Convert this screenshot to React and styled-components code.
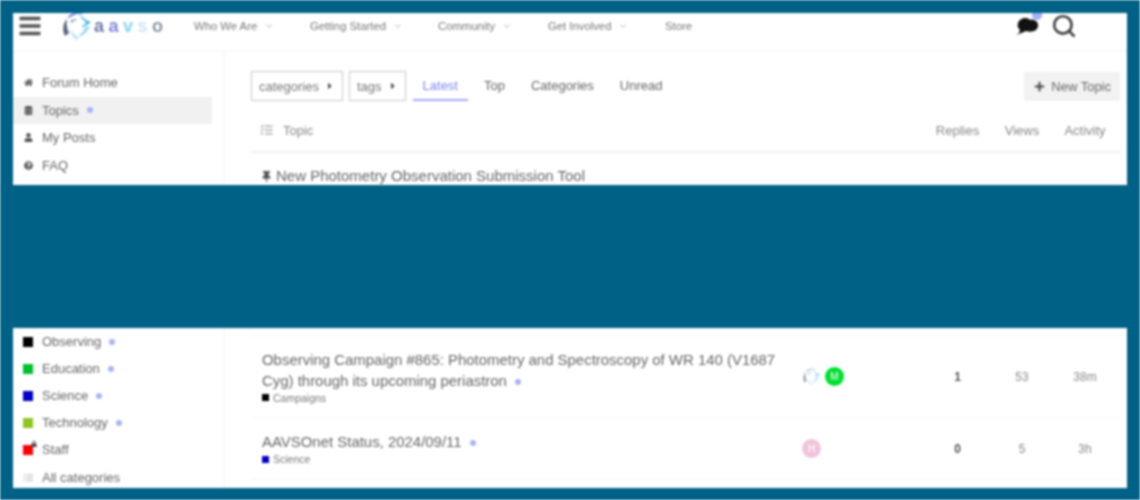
import React from "react";
import styled, { createGlobalStyle } from "styled-components";
import {
  FaBars,
  FaCaretRight,
  FaDatabase,
  FaHome,
  FaListUl,
  FaLock,
  FaPlus,
  FaQuestionCircle,
  FaTasks,
  FaThumbtack,
  FaUser,
} from "react-icons/fa";
import { FiChevronDown, FiSearch } from "react-icons/fi";

const GlobalStyle = createGlobalStyle`
  html, body {
    margin: 0;
    padding: 0;
    background: #fff;
  }
  body {
    font-family: "Liberation Sans", Arial, sans-serif;
    color: #555;
  }
`;

const Frame = styled.div`
  width: 1140px;
  height: 500px;
  box-sizing: border-box;
  padding: 13px 13px 0;
  display: flex;
  flex-direction: column;
  overflow: hidden;
  background: #006186;
  filter: blur(0.8px);
`;

const Panel = styled.section`
  height: ${(p) => p.$height}px;
  margin-bottom: ${(p) => p.$gap || 0}px;
  flex: none;
  background: #fff;
  overflow: hidden;
`;

const Header = styled.header`
  height: 26px;
  padding-bottom: 12px;
  display: flex;
  align-items: center;
  border-bottom: 1px solid #f3f3f3;
  color: #555;
`;

const Burger = styled(FaBars)`
  width: 24px;
  height: 24px;
  margin-left: 5px;
  color: #555;
`;

const LogoBox = styled.div`
  display: flex;
  align-items: center;
  margin-left: 19px;
  width: 133px;
`;

const LogoText = styled.div`
  display: flex;
  gap: 4.5px;
  margin-left: 1px;
  font-size: 18px;
  font-weight: 700;
  line-height: 20px;
`;

const LogoLetter = styled.span`
  color: ${(p) => p.$color};
`;

const NavItem = styled.div`
  display: flex;
  align-items: center;
  gap: 7px;
  width: ${(p) => p.$width}px;
  font-size: 11.3px;
  color: #777;
  svg {
    width: 10px;
    height: 10px;
    color: #aab;
  }
`;

const HeaderIcons = styled.div`
  margin-left: auto;
  margin-right: 50px;
  display: flex;
  align-items: center;
  gap: 12px;
`;

const ChatWrap = styled.div`
  position: relative;
  display: flex;
  color: #111;
`;

const ChatDot = styled.span`
  position: absolute;
  top: -6px;
  right: -3px;
  width: 10px;
  height: 10px;
  border-radius: 50%;
  background: #9fb0f5;
`;

const SearchIcon = styled(FiSearch)`
  width: 26px;
  height: 26px;
  color: #444;
  stroke-width: 2.5;
`;

const Columns = styled.div`
  display: grid;
  grid-template-columns: 211px 1fr;
`;

const Sidebar = styled.nav`
  border-right: 1px solid #f5f5f5;
  min-height: 440px;
  padding-top: ${(p) => p.$top}px;
`;

const SideRow = styled.div`
  height: ${(p) => p.$rowHeight || 27.5}px;
  width: 199px;
  display: flex;
  align-items: center;
  font-size: 13px;
  color: #666;
  background: ${(p) => (p.$active ? "#f1f1f1" : "transparent")};
`;

const SideIcon = styled.span`
  width: 29px;
  padding-left: 11px;
  box-sizing: border-box;
  display: flex;
  align-items: center;
  color: ${(p) => p.$color || "#555"};
  svg {
    width: 9px;
    height: 9px;
  }
`;

const CatSquare = styled.span`
  position: relative;
  display: block;
  width: 10px;
  height: 10px;
  margin-left: -1px;
  background: ${(p) => p.$color};
`;

const StaffLock = styled(FaLock)`
  position: absolute;
  top: -4px;
  right: -4px;
  color: #444;
  && {
    width: 6px;
    height: 6px;
  }
`;

const Dot = styled.span`
  display: inline-block;
  width: 6px;
  height: 6px;
  margin-left: ${(p) => p.$gap || 8}px;
  border-radius: 50%;
  background: #a5b4f5;
  vertical-align: middle;
`;

const Main = styled.main`
  padding: ${(p) => p.$top}px 7px 0 27px;
`;

const Controls = styled.div`
  display: flex;
  align-items: center;
  height: 30px;
`;

const DropBox = styled.div`
  height: 30px;
  box-sizing: border-box;
  padding: 0 7px;
  margin-right: 6px;
  display: flex;
  align-items: center;
  gap: 6px;
  border: 1px solid #c9c9c9;
  font-size: 13px;
  color: #777;
  svg {
    width: 10px;
    height: 10px;
    color: #444;
  }
`;

const Tab = styled.div`
  height: 30px;
  margin-left: ${(p) => p.$gap}px;
  padding: 0 10px;
  display: flex;
  align-items: center;
  box-sizing: border-box;
  font-size: 13px;
  color: ${(p) => (p.$active ? "#7f86f0" : "#666")};
  border-bottom: 2px solid ${(p) => (p.$active ? "#a5a9f5" : "transparent")};
`;

const NewTopic = styled.div`
  margin-left: auto;
  height: 29px;
  padding: 0 9px 0 10px;
  display: flex;
  align-items: center;
  gap: 6px;
  background: #f2f2f2;
  font-size: 13px;
  color: #666;
  svg {
    width: 11px;
    height: 11px;
    color: #444;
  }
`;

const TableHead = styled.div`
  display: grid;
  grid-template-columns: 1fr 73px 56px 70px;
  align-items: center;
  height: 42px;
  padding: 8px 0 0 9px;
  border-bottom: 2px solid #f1f1f1;
  font-size: 13px;
  color: #888;
`;

const TopicHead = styled.div`
  display: flex;
  align-items: center;
  gap: 10px;
  svg {
    width: 13px;
    height: 12px;
    color: #aaa;
  }
`;

const HeadCell = styled.div`
  text-align: center;
`;

const PinnedTitle = styled.div`
  display: flex;
  align-items: center;
  gap: 5px;
  padding: 13px 0 0 11px;
  font-size: 15px;
  line-height: 20px;
  color: #666;
  svg {
    width: 9px;
    height: 11px;
    color: #555;
  }
`;

const TopicRow = styled.div`
  display: grid;
  grid-template-columns: 540px 1fr 73px 56px 70px;
  align-items: center;
  height: ${(p) => p.$height}px;
  padding-left: 11px;
  box-sizing: border-box;
  border-top: 1px solid #f7f7f7;
`;

const TopicText = styled.div`
  width: 520px;
`;

const TopicTitle = styled.div`
  font-size: 14.95px;
  line-height: 21px;
  color: #666;
`;

const TopicCat = styled.div`
  display: flex;
  align-items: center;
  gap: 4px;
  font-size: 10.5px;
  line-height: 14px;
  color: #777;
`;

const TinySquare = styled.span`
  width: 7px;
  height: 7px;
  background: ${(p) => p.$color};
`;

const Posters = styled.div`
  display: flex;
  align-items: center;
  gap: 4px;
`;

const Avatar = styled.span`
  width: 19px;
  height: 19px;
  border-radius: 50%;
  display: flex;
  align-items: center;
  justify-content: center;
  background: ${(p) => p.$color};
  color: #fff;
  font-size: 10px;
`;

const FadedMark = styled.span`
  display: flex;
  opacity: 0.6;
`;

const Stat = styled.div`
  text-align: center;
  font-size: 12px;
  color: ${(p) => (p.$bold ? "#555" : "#888")};
  font-weight: ${(p) => (p.$bold ? 700 : 400)};
`;

// swirl mark used for the logo and the first poster avatar
const Swirl = ({ size }) => (
  <svg width={size} height={size} viewBox="0 0 32 32" fill="none">
    <path d="M6 8c4-6 12-7 17-4-5-1-10 0-13 3z" fill="#7d8fd8" />
    <path d="M18 2c2 5 6 8 12 10-4 3-7 5-10 5 3-2 5-4 5-5-3-2-6-5-7-10z" fill="#46b9e6" />
    <path d="M29 16c-2 6-7 10-13 11 3-2 7-6 8-10z" fill="#9fdcf2" />
    <path d="M16 30c-4-2-7-6-7-11 2 3 4 6 9 8z" fill="#bfe6f4" />
    <path d="M4 26C1 20 2 13 6 9c-1 5 0 10 2 14z" fill="#59677f" />
    <path d="M9 11c3-2 6-2 8-1-3 0-5 1-6 3z" fill="#8da0c8" />
  </svg>
);

const ChatBlob = () => (
  <svg width="24" height="20" viewBox="0 0 24 20" fill="currentColor">
    <path d="M3 19l2-5C3 12 2 10 3 7c1-3 4-5 8-5 2 0 3 1 4 2 2-1 5 0 7 2 2 3 1 6-1 8-3 2-7 2-10 1-3 1-6 3-10 4z" />
  </svg>
);

const navItems = [
  { label: "Who We Are", width: 116, chevron: true },
  { label: "Getting Started", width: 128, chevron: true },
  { label: "Community", width: 110, chevron: true },
  { label: "Get Involved", width: 117, chevron: true },
  { label: "Store", width: 60 },
];

const logoLetters = [
  ["a", "#6f78a8"],
  ["a", "#7d88e0"],
  ["v", "#8ad4f4"],
  ["s", "#cfe6f2"],
  ["o", "#8c97a5"],
];

const categories = [
  { label: "Observing", color: "#000", dot: true },
  { label: "Education", color: "#00c030", dot: true },
  { label: "Science", color: "#0000c8", dot: true },
  { label: "Technology", color: "#8cc620", dot: true },
  { label: "Staff", color: "#f00", lock: true },
];

export default function App() {
  return (
    <>
      <GlobalStyle />
      <Frame>
        <Panel $height={172} $gap={143}>
          <Header>
            <Burger />
            <LogoBox>
              <Swirl size={32} />
              <LogoText>
                {logoLetters.map(([letter, color], i) => (
                  <LogoLetter key={i} $color={color}>{letter}</LogoLetter>
                ))}
              </LogoText>
            </LogoBox>
            {navItems.map((item) => (
              <NavItem key={item.label} $width={item.width}>
                {item.label}
                {item.chevron && <FiChevronDown />}
              </NavItem>
            ))}
            <HeaderIcons>
              <ChatWrap>
                <ChatBlob />
                <ChatDot />
              </ChatWrap>
              <SearchIcon />
            </HeaderIcons>
          </Header>
          <Columns>
            <Sidebar $top={17}>
              <SideRow><SideIcon><FaHome /></SideIcon>Forum Home</SideRow>
              <SideRow $active><SideIcon><FaDatabase /></SideIcon>Topics<Dot /></SideRow>
              <SideRow><SideIcon><FaUser /></SideIcon>My Posts</SideRow>
              <SideRow><SideIcon><FaQuestionCircle /></SideIcon>FAQ</SideRow>
            </Sidebar>
            <Main $top={19}>
              <Controls>
                <DropBox>categories<FaCaretRight /></DropBox>
                <DropBox>tags<FaCaretRight /></DropBox>
                <Tab $active $gap={1}>Latest</Tab>
                <Tab $gap={6}>Top</Tab>
                <Tab $gap={6}>Categories</Tab>
                <Tab $gap={6}>Unread</Tab>
                <NewTopic><FaPlus />New Topic</NewTopic>
              </Controls>
              <TableHead>
                <TopicHead><FaTasks />Topic</TopicHead>
                <HeadCell>Replies</HeadCell>
                <HeadCell>Views</HeadCell>
                <HeadCell>Activity</HeadCell>
              </TableHead>
              <PinnedTitle><FaThumbtack />New Photometry Observation Submission Tool</PinnedTitle>
            </Main>
          </Columns>
        </Panel>
        <Panel $height={160}>
          <Columns>
            <Sidebar $top={0}>
              {categories.map((cat) => (
                <SideRow key={cat.label} $rowHeight={27.1}>
                  <SideIcon>
                    <CatSquare $color={cat.color}>{cat.lock && <StaffLock />}</CatSquare>
                  </SideIcon>
                  {cat.label}
                  {cat.dot && <Dot />}
                </SideRow>
              ))}
              <SideRow $rowHeight={27.1}><SideIcon $color="#bbb"><FaListUl /></SideIcon>All categories</SideRow>
            </Sidebar>
            <Main $top={7}>
              <TopicRow $height={82}>
                <TopicText>
                  <TopicTitle>
                    Observing Campaign #865: Photometry and Spectroscopy of WR 140 (V1687 Cyg) through its upcoming periastron<Dot />
                  </TopicTitle>
                  <TopicCat><TinySquare $color="#000" />Campaigns</TopicCat>
                </TopicText>
                <Posters>
                  <FadedMark><Swirl size={19} /></FadedMark>
                  <Avatar $color="#00e030">M</Avatar>
                </Posters>
                <Stat $bold>1</Stat>
                <Stat>53</Stat>
                <Stat>38m</Stat>
              </TopicRow>
              <TopicRow $height={62}>
                <TopicText>
                  <TopicTitle>AAVSOnet Status, 2024/09/11<Dot /></TopicTitle>
                  <TopicCat><TinySquare $color="#0000c8" />Science</TopicCat>
                </TopicText>
                <Posters>
                  <Avatar $color="#f0c4dc">H</Avatar>
                </Posters>
                <Stat $bold>0</Stat>
                <Stat>5</Stat>
                <Stat>3h</Stat>
              </TopicRow>
              <TopicRow $height={9} />
            </Main>
          </Columns>
        </Panel>
      </Frame>
    </>
  );
}
